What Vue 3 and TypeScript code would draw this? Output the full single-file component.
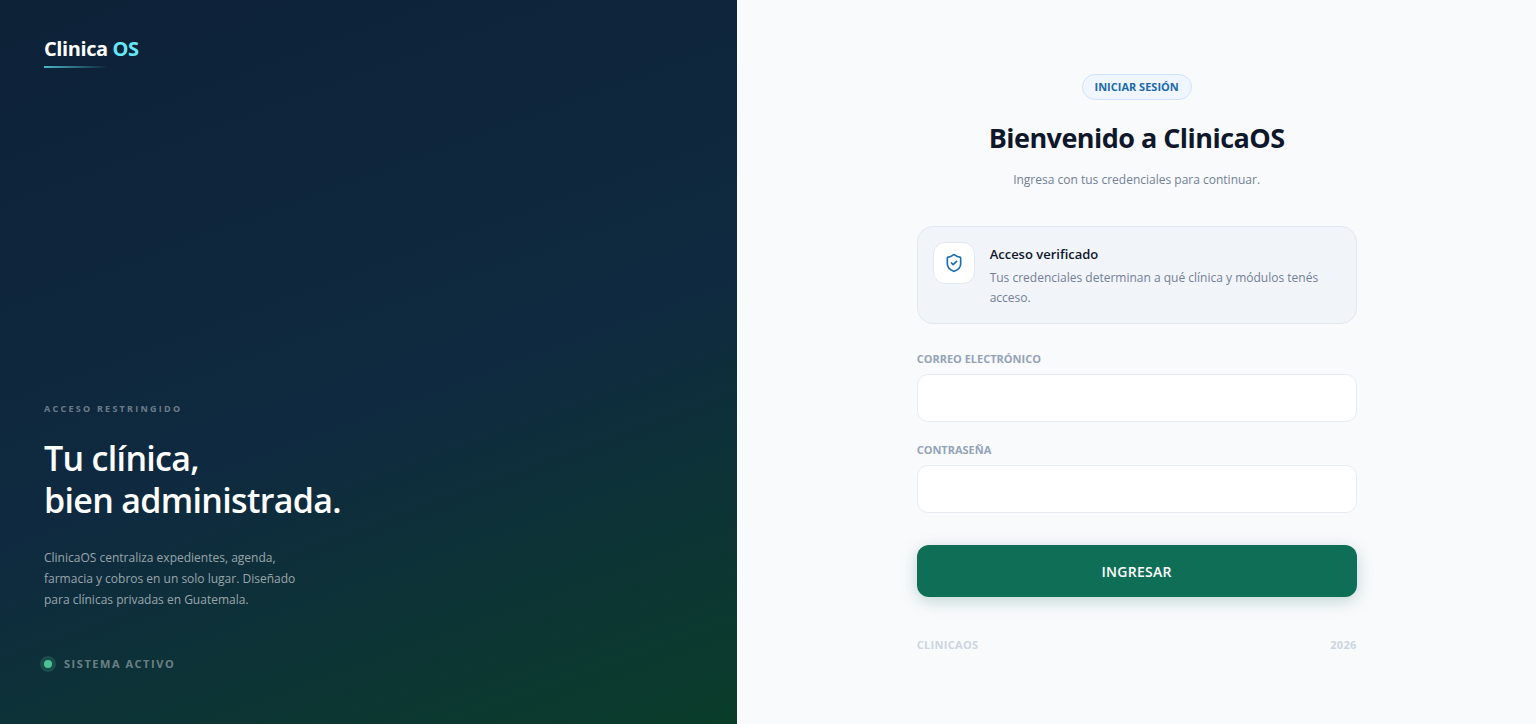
<script setup lang="ts">
import { ref } from 'vue'

const email = ref<string>('')
const password = ref<string>('')
const year = 2026
</script>

<template>
  <div class="page">
    <aside class="brand-panel">
      <div class="brand">Clinica <span class="brand-accent">OS</span></div>
      <div class="pitch">
        <p class="eyebrow">Acceso restringido</p>
        <h2 class="headline">Tu clínica,<br />bien administrada.</h2>
        <p class="summary">
          ClinicaOS centraliza expedientes, agenda,<br />
          farmacia y cobros en un solo lugar. Diseñado<br />
          para clínicas privadas en Guatemala.
        </p>
        <p class="status"><span class="status-dot"></span>Sistema activo</p>
      </div>
    </aside>

    <main class="login-panel">
      <div class="login">
        <header class="intro">
          <span class="badge">Iniciar sesión</span>
          <h1 class="title">Bienvenido a ClinicaOS</h1>
          <p class="subtitle">Ingresa con tus credenciales para continuar.</p>
        </header>

        <section class="notice">
          <div class="notice-icon">
            <svg viewBox="0 0 24 24" width="20" height="20" fill="none" stroke="currentColor" stroke-width="2" stroke-linecap="round" stroke-linejoin="round" aria-hidden="true">
              <path d="M20 13c0 5-3.500 7.500-7.660 8.950a1 1 0 0 1-.67-.01C7.500 20.500 4 18 4 13V6a1 1 0 0 1 1-1c2 0 4.500-1.200 6.240-2.720a1.170 1.170 0 0 1 1.520 0C14.510 3.810 17 5 19 5a1 1 0 0 1 1 1z" />
              <path d="M9 12l2 2 4-4" />
            </svg>
          </div>
          <div>
            <h2 class="notice-title">Acceso verificado</h2>
            <p class="notice-text">Tus credenciales determinan a qué clínica y módulos tenés acceso.</p>
          </div>
        </section>

        <form class="form" @submit.prevent>
          <div class="field">
            <label class="label" for="email">Correo electrónico</label>
            <input id="email" v-model="email" class="input" type="email" autocomplete="email" />
          </div>
          <div class="field">
            <label class="label" for="password">Contraseña</label>
            <input id="password" v-model="password" class="input" type="password" autocomplete="current-password" />
          </div>
          <button class="submit" type="submit">INGRESAR</button>
        </form>

        <footer class="footer"><span>ClinicaOS</span><span>{{ year }}</span></footer>
      </div>
    </main>
  </div>
</template>

<style>
body {
  margin: 0;
  background: #f9fafc;
}
</style>

<style scoped>
.page {
  display: grid;
  grid-template-columns: 48% 1fr;
  min-height: 100vh;
  font-family: "Segoe UI", "Open Sans", "Noto Sans", sans-serif;
}

h1, h2, p {
  margin: 0;
}

.brand-panel {
  display: flex;
  flex-direction: column;
  justify-content: space-between;
  box-sizing: border-box;
  padding: 36px 44px 52px;
  background: linear-gradient(160deg, #0d2137 0%, #0f2a40 55%, #0a3d2a 100%);
  color: #fff;
}

.brand {
  align-self: flex-start;
  font-size: 20px;
  line-height: 26px;
  font-weight: 700;
  letter-spacing: -0.02em;
}

.brand::after {
  content: "";
  display: block;
  width: 64px;
  height: 2px;
  margin-top: 4px;
  background: linear-gradient(90deg, #4bb7c6, transparent);
}

.brand-accent {
  color: #67e8f9;
}

.eyebrow {
  font-size: 9px;
  line-height: 14px;
  font-weight: 700;
  letter-spacing: 0.25em;
  text-transform: uppercase;
  color: rgba(255, 255, 255, 0.4);
}

.headline {
  margin-top: 21px;
  font-size: 34px;
  line-height: 42px;
  font-weight: 600;
  letter-spacing: -0.02em;
}

.summary {
  margin-top: 26px;
  font-size: 12px;
  line-height: 21px;
  color: rgba(255, 255, 255, 0.58);
}

.status {
  display: flex;
  align-items: center;
  gap: 12px;
  margin-top: 46px;
  font-size: 11px;
  line-height: 16px;
  font-weight: 700;
  letter-spacing: 0.14em;
  text-transform: uppercase;
  color: rgba(255, 255, 255, 0.4);
}

.status-dot {
  width: 8px;
  height: 8px;
  border-radius: 50%;
  background: #4cc397;
  box-shadow: 0 0 0 4px rgba(76, 195, 151, 0.2);
}

.login-panel {
  display: flex;
  align-items: center;
  justify-content: center;
  padding: 35px 32px 32px;
  background: #f9fafc;
}

.login {
  width: 100%;
  max-width: 440px;
}

.intro {
  display: flex;
  flex-direction: column;
  align-items: center;
  text-align: center;
}

.badge {
  padding: 4px 12px;
  border: 1px solid #cfe2fd;
  border-radius: 999px;
  background: #eff6ff;
  font-size: 11px;
  line-height: 16px;
  font-weight: 700;
  text-transform: uppercase;
  color: #2069a8;
}

.title {
  margin-top: 19px;
  font-size: 27px;
  line-height: 38px;
  font-weight: 700;
  letter-spacing: -0.02em;
  color: #0f172a;
}

.subtitle {
  margin-top: 13px;
  font-size: 12px;
  line-height: 20px;
  color: #718096;
}

.notice {
  display: flex;
  align-items: flex-start;
  gap: 15px;
  margin-top: 36px;
  padding: 15px;
  border: 1px solid #e2e8f0;
  border-radius: 16px;
  background: #f1f4f9;
}

.notice-icon {
  display: flex;
  flex: none;
  align-items: center;
  justify-content: center;
  width: 40px;
  height: 40px;
  border: 1px solid #e2e8f0;
  border-radius: 12px;
  background: #fff;
  color: #1d6fae;
}

.notice-title {
  margin-top: 2px;
  font-size: 13px;
  line-height: 20px;
  font-weight: 600;
  color: #0f172a;
}

.notice-text {
  margin-top: 4px;
  font-size: 12px;
  line-height: 20px;
  color: #718096;
}

.form {
  display: flex;
  flex-direction: column;
  gap: 20px;
  margin-top: 27px;
}

.field {
  display: flex;
  flex-direction: column;
  gap: 7px;
}

.label {
  font-size: 11px;
  line-height: 16px;
  font-weight: 700;
  text-transform: uppercase;
  color: #94a3b8;
}

.input {
  box-sizing: border-box;
  width: 100%;
  height: 48px;
  padding: 0 16px;
  border: 1px solid #e7ecf2;
  border-radius: 11px;
  background: #fff;
  font: inherit;
  font-size: 14px;
  color: #0f172a;
}

.submit {
  height: 52px;
  margin-top: 12px;
  border: 0;
  border-radius: 12px;
  background: #0f6e56;
  box-shadow: 0 4px 16px rgba(15, 110, 86, 0.25);
  font: inherit;
  font-size: 14px;
  font-weight: 600;
  letter-spacing: 0.02em;
  color: #fff;
  cursor: pointer;
}

.footer {
  display: flex;
  justify-content: space-between;
  margin-top: 40px;
  font-size: 11px;
  line-height: 16px;
  font-weight: 700;
  letter-spacing: 0.03em;
  text-transform: uppercase;
  color: #cbd5e1;
}
</style>
